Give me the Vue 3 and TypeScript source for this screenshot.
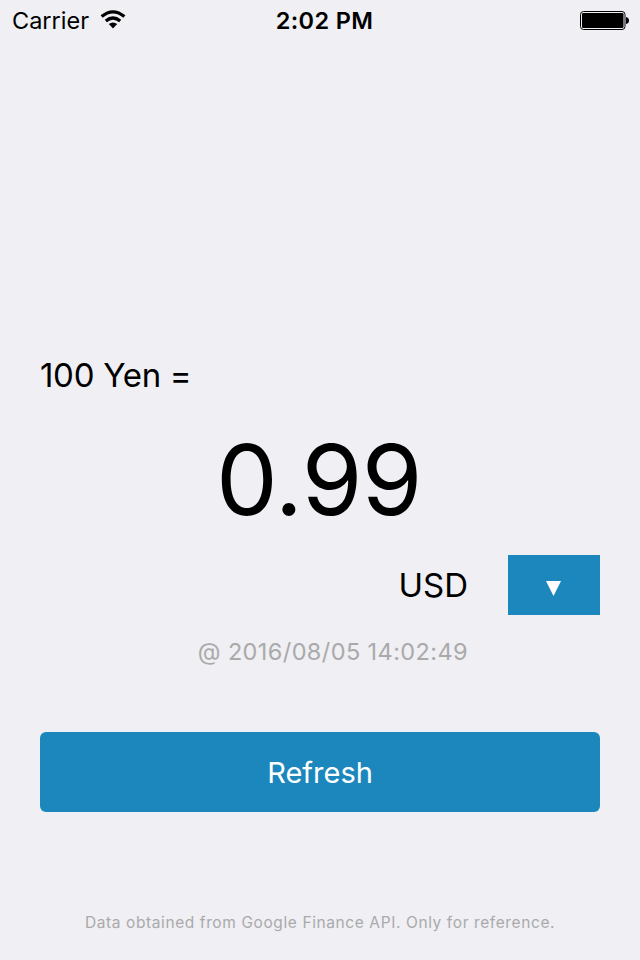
<script setup lang="ts">
import { ref } from 'vue'

const amount = ref<string>('0.99')
const currency = ref<string>('USD')
const updatedAt = ref<string>('2016/08/05 14:02:49')
</script>

<template>
  <main class="screen">
    <header class="status">
      <div class="network">
        <span>Carrier</span>
        <svg class="wifi" width="26" height="20" viewBox="0 0 26 20">
          <path d="M1.6 6.6 Q13 -2.8 24.4 6.6" />
          <path d="M5.8 11 Q13 5 20.2 11" />
          <path class="dot" d="M8.8 14 Q13 10.8 17.2 14 L13 18.6 Z" />
        </svg>
      </div>
      <time class="clock">2:02 PM</time>
      <svg class="battery" width="50" height="20" viewBox="0 0 50 20">
        <rect class="case" x="0.5" y="0.5" width="44.5" height="18" rx="3" />
        <rect x="2" y="2" width="41.5" height="15" rx="1.2" />
        <path d="M46 6 Q49 6.5 49 9.5 Q49 12.5 46 13 Z" />
      </svg>
    </header>
    <p class="base">100 Yen =</p>
    <p class="amount">{{ amount }}</p>
    <div class="currency">
      <span class="code">{{ currency }}</span>
      <button class="picker" aria-label="Currency">
        <svg width="15" height="15" viewBox="0 0 15 15"><path d="M0 0H15L7.5 15Z" /></svg>
      </button>
    </div>
    <p class="updated">@ {{ updatedAt }}</p>
    <button class="refresh"><span>Refresh</span></button>
    <footer class="note">Data obtained from Google Finance API. Only for reference.</footer>
  </main>
</template>

<style>
body {
  margin: 0;
}
</style>

<style scoped>
.screen {
  box-sizing: border-box;
  width: 640px;
  height: 960px;
  display: flex;
  flex-direction: column;
  background: #efeff4;
  color: #000;
  font-family: Inter, 'Liberation Sans', sans-serif;
  overflow: hidden;
}
p {
  margin: 0;
}
button {
  border: 0;
  padding: 0;
  background: #1c87bd;
  color: #fff;
  font-family: inherit;
}
.status {
  box-sizing: border-box;
  height: 42px;
  padding: 0 10px 0 12px;
  display: grid;
  grid-template-columns: 1fr auto 1fr;
  align-items: center;
  font-size: 23.5px;
  line-height: 42px;
}
.network {
  display: flex;
  align-items: center;
  gap: 10.5px;
}
.wifi {
  fill: none;
  stroke: #000;
  stroke-width: 3.2;
  margin-top: -2px;
}
.wifi .dot {
  fill: #000;
  stroke: none;
}
.clock {
  padding-left: 7px;
  font-size: 23.5px;
  font-weight: 600;
  letter-spacing: 0.35px;
}
.battery {
  justify-self: end;
}
.case {
  fill: none;
  stroke: #000;
}
.base {
  margin: 313px 40px 0;
  font-size: 33px;
  line-height: 40px;
  letter-spacing: -0.3px;
}
.amount {
  margin-top: 20px;
  padding-right: 2px;
  text-align: center;
  font-size: 98px;
  letter-spacing: -0.6px;
  line-height: 130px;
}
.currency {
  margin: 10px 40px 0;
  height: 60px;
  display: flex;
  justify-content: flex-end;
  align-items: center;
  gap: 40px;
}
.code {
  font-size: 33px;
}
.picker {
  width: 92px;
  height: 60px;
  display: flex;
  align-items: center;
  justify-content: center;
}
.picker svg {
  fill: #fff;
  margin: 6px 1px 0 0;
}
.updated {
  margin: 22px 172px 0 0;
  text-align: right;
  color: #aaa;
  font-size: 23.5px;
  letter-spacing: 0.4px;
  line-height: 30px;
}
.refresh {
  margin: 65px 40px 0;
  height: 80px;
  border-radius: 6px;
  font-size: 29px;
}
.refresh span {
  display: block;
  padding-top: 1px;
}
.note {
  margin-top: 101px;
  text-align: center;
  color: #aaa;
  font-size: 15.5px;
  letter-spacing: 0.6px;
  line-height: 20px;
}
</style>
